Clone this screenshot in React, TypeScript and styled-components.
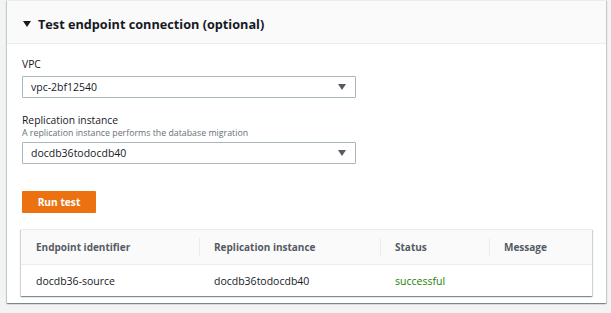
import React from "react";
import styled, { createGlobalStyle } from "styled-components";

const Global = createGlobalStyle`
  html, body { margin: 0; padding: 0; background: #f2f3f3; }
  body { font-family: "Open Sans", "Noto Sans", Arial, sans-serif; color: #16191f; }
  * { box-sizing: border-box; }
`;

const Page = styled.div`
  padding: 0 5px 0 7px;
  height: 313px;
`;

const Panel = styled.section`
  background: #fff;
  border-top: 1px solid #eaeded;
  box-shadow: 0 1px 1px 0 rgba(0, 28, 36, 0.3), 1px 1px 1px 0 rgba(0, 28, 36, 0.15),
    -1px 1px 1px 0 rgba(0, 28, 36, 0.15);
  height: 303px;
`;

const Header = styled.header`
  height: 43px;
  background: #fafafa;
  border-bottom: 1px solid #eaeded;
  display: flex;
  align-items: center;
  padding: 3px 0 0 16px;
  gap: 7px;
`;

const Caret = styled.span`
  width: 0;
  height: 0;
  border-left: 4px solid transparent;
  border-right: 4px solid transparent;
  border-top: 6px solid #16191f;
  margin-top: 1px;
`;

const Title = styled.h2`
  margin: 0;
  font-size: 12.7px;
  font-weight: 700;
  color: #16191f;
`;

const Body = styled.div`
  padding: 13px 14px 0 15px;
  display: flex;
  flex-direction: column;
`;

const Field = styled.div<{ $mb: number }>`
  display: flex;
  flex-direction: column;
  margin-bottom: ${(p) => p.$mb}px;
`;

const Label = styled.label`
  font-size: 10.3px;
  line-height: 14px;
  color: #16191f;
`;

const Description = styled.span`
  font-size: 8.8px;
  line-height: 12px;
  color: #687078;
`;

const Select = styled.div<{ $mt: number }>`
  margin-top: ${(p) => p.$mt}px;
  width: 334px;
  height: 22px;
  border: 1px solid #aab7b8;
  border-radius: 1px;
  display: flex;
  align-items: center;
  justify-content: space-between;
  padding: 0 9px 0 8px;
  font-size: 10.5px;
  color: #16191f;
`;

const Arrow = styled.span`
  width: 0;
  height: 0;
  border-left: 4.5px solid transparent;
  border-right: 4.5px solid transparent;
  border-top: 6px solid #545b64;
`;

const Button = styled.button`
  align-self: flex-start;
  width: 74px;
  height: 22px;
  background: #ec7211;
  border: none;
  border-radius: 1px;
  color: #fff;
  font-family: inherit;
  font-weight: 700;
  font-size: 10.2px;
  padding: 0;
  margin-bottom: 16px;
`;

const Table = styled.div`
  margin-left: -1px;
  box-shadow: 0 1px 1px 0 rgba(0, 28, 36, 0.3), 1px 1px 1px 0 rgba(0, 28, 36, 0.15),
    -1px 1px 1px 0 rgba(0, 28, 36, 0.15);
  border-top: 1px solid #eaeded;
`;

const Row = styled.div<{ $head?: boolean }>`
  display: grid;
  grid-template-columns: 178px 181px 109px 1fr;
  height: ${(p) => (p.$head ? 35 : 31)}px;
  background: ${(p) => (p.$head ? "#fafafa" : "#fff")};
  border-bottom: ${(p) => (p.$head ? "1px solid #eaeded" : "none")};
  font-size: ${(p) => (p.$head ? 10 : 10.5)}px;
  font-weight: ${(p) => (p.$head ? 700 : 400)};
  color: ${(p) => (p.$head ? "#545b64" : "#16191f")};
`;

const Cell = styled.div<{ $sep?: boolean; $tone?: string }>`
  position: relative;
  display: flex;
  align-items: center;
  padding-left: 15px;
  color: ${(p) => p.$tone || "inherit"};
  &::before {
    content: "";
    display: ${(p) => (p.$sep ? "block" : "none")};
    position: absolute;
    left: 0;
    top: 8px;
    bottom: 8px;
    border-left: 1px solid #eaeded;
  }
`;

export default function App() {
  return (
    <>
      <Global />
      <Page>
        <Panel>
          <Header>
            <Caret />
            <Title>Test endpoint connection (optional)</Title>
          </Header>
          <Body>
            <Field $mb={15}>
              <Label>VPC</Label>
              <Select $mt={5}>
                <span>vpc-2bf12540</span>
                <Arrow />
              </Select>
            </Field>
            <Field $mb={27}>
              <Label>Replication instance</Label>
              <Description>A replication instance performs the database migration</Description>
              <Select $mt={3}>
                <span>docdb36todocdb40</span>
                <Arrow />
              </Select>
            </Field>
            <Button>Run test</Button>
            <Table>
              <Row $head>
                <Cell>Endpoint identifier</Cell>
                <Cell $sep>Replication instance</Cell>
                <Cell $sep>Status</Cell>
                <Cell $sep>Message</Cell>
              </Row>
              <Row>
                <Cell>docdb36-source</Cell>
                <Cell>docdb36todocdb40</Cell>
                <Cell $tone="#1d8102">successful</Cell>
                <Cell />
              </Row>
            </Table>
          </Body>
        </Panel>
      </Page>
    </>
  );
}
